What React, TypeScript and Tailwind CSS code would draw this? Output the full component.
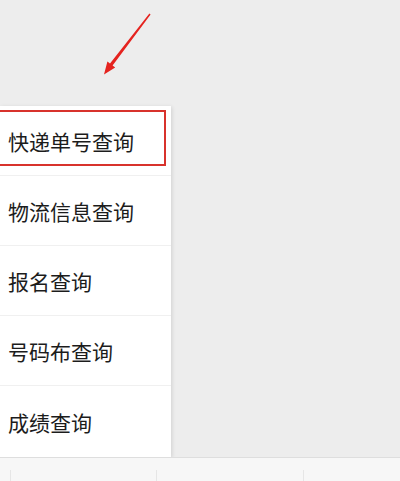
import React from "react";

const items = ["快递单号查询", "物流信息查询", "报名查询", "号码布查询", "成绩查询"];

export default function App() {
  return (
    <div
      className="w-[400px] h-[481px] bg-[#ededed] overflow-hidden flex flex-col"
      style={{ fontFamily: '"Noto Sans CJK SC", "Noto Sans", sans-serif' }}
    >
      <div className="h-[106px] shrink-0">
        <svg width="400" height="106" viewBox="0 0 400 106">
          <polygon
            points="149.4,13.6 150.6,14.4 112.6,65.6 115.2,67.4 104,74.5 107.4,61.6 110,63.6"
            fill="#e5231f"
          />
        </svg>
      </div>
      <div className="w-[171px] h-[351px] shrink-0 bg-white shadow-[1px_1px_4px_rgba(0,0,0,0.12)] flex flex-col">
        {items.map((t, i) => (
          <div
            key={t}
            className={
              i === 0
                ? "h-[70px] shrink-0 border-b border-[#f0f0f0] flex flex-col"
                : i === items.length - 1
                ? "h-[70px] shrink-0 flex items-center pl-[8px] pt-[2px]"
                : "h-[70px] shrink-0 border-b border-[#f0f0f0] flex items-center pl-[8px] pt-[2px]"
            }
          >
            {i === 0 ? (
              <div className="mt-[4px] ml-[-4px] mr-[5px] h-[56px] border-2 border-[#d8322c] flex items-center pl-[10px] pt-[6px]">
                <span className="text-[21px] leading-none text-[#1c1c1c]">{t}</span>
              </div>
            ) : (
              <span className="text-[21px] leading-none text-[#1c1c1c]">{t}</span>
            )}
          </div>
        ))}
      </div>
      <div className="flex-1 bg-[#f7f7f7] border-t border-[#dedede] flex pl-[10px] pt-[12px]">
        <div className="w-[146px] border-l border-[#e6e6e6]" />
        <div className="w-[147px] border-l border-[#e6e6e6]" />
        <div className="flex-1 border-l border-[#e6e6e6]" />
      </div>
    </div>
  );
}
